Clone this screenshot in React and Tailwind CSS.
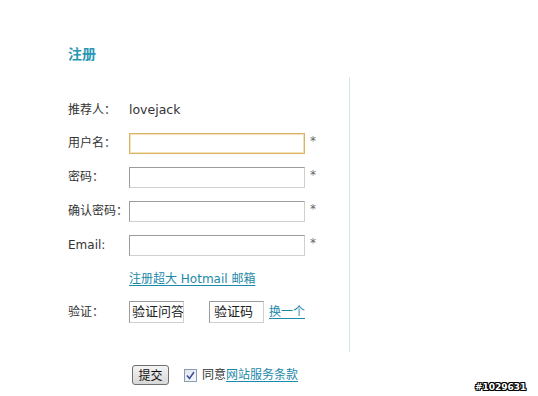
import React from "react";

const font = "font-['DejaVu_Sans','Noto_Sans_CJK_SC',sans-serif]";

function Row({ h, label, children }) {
  return (
    <div className={`flex items-center ${h}`}>
      <div className="w-[61px] shrink-0">{label}</div>
      {children}
    </div>
  );
}

function Field({ focused }) {
  return (
    <div className="flex items-start">
      <div
        className={`w-[176px] h-[21px] bg-white border ${
          focused
            ? "border-[#d8b468] shadow-[inset_0_0_0_1px_#f3e2b8]"
            : "border-[#9c9c9c] border-b-[#cfcfcf] border-r-[#cfcfcf]"
        }`}
      />
      <span className="ml-[5px] mt-[1px] text-[12px] leading-[14px] text-[#666]">*</span>
    </div>
  );
}

export default function App() {
  return (
    <div className={`relative w-[538px] h-[396px] bg-white text-[12px] text-[#333] ${font}`}>
      <div className="pl-[68px] pt-[45px]">
        <h2 className="text-[14px] leading-[16px] font-bold text-[#2b97b3] font-['Noto_Sans_CJK_SC',sans-serif]">
          注册
        </h2>
        <div className="mt-[16px] w-[282px] h-[275px] border-r border-[#cfe9e8] pt-[17px]">
          <Row h="h-[32px]" label="推荐人：">
            <span className="text-[12.5px]">lovejack</span>
          </Row>
          <Row h="h-[34px]" label="用户名：">
            <Field focused />
          </Row>
          <Row h="h-[34px]" label="密码：">
            <Field />
          </Row>
          <Row h="h-[34px]" label="确认密码：">
            <Field />
          </Row>
          <Row h="h-[34px]" label="Email:">
            <Field />
          </Row>
          <Row h="h-[33px]" label="">
            <a className="text-[#1b89a8] underline underline-offset-2 cursor-pointer">
              注册超大 Hotmail 邮箱
            </a>
          </Row>
          <Row h="h-[34px]" label="验证：">
            <div className="flex items-center">
              <div className="w-[55px] h-[22px] border border-[#9c9c9c] border-b-[#cfcfcf] border-r-[#cfcfcf] pl-[2px] overflow-hidden whitespace-nowrap text-[13px] leading-[20px] text-[#222]">
                验证问答
              </div>
              <div className="ml-[25px] w-[55px] h-[22px] border border-[#9c9c9c] border-b-[#cfcfcf] border-r-[#cfcfcf] pl-[4px] overflow-hidden whitespace-nowrap text-[13px] leading-[20px] text-[#222]">
                验证码
              </div>
              <a className="ml-[5px] text-[#1b89a8] underline underline-offset-2 cursor-pointer">换一个</a>
            </div>
          </Row>
        </div>
        <div className="mt-[13px] flex items-center h-[20px] pl-[64px]">
          <button className="w-[37px] h-[20px] rounded-[3px] border border-[#707070] bg-gradient-to-b from-[#f4f4f4] to-[#d8d8d8] text-[12px] leading-[18px] text-[#111] font-['Noto_Sans_CJK_SC',sans-serif]">
            提交
          </button>
          <div className="ml-[15px] w-[13px] h-[13px] border border-[#8a9bb3] bg-gradient-to-br from-[#dfe5ee] to-[#f8f9fb] flex items-center justify-center">
            <svg width="9" height="9" viewBox="0 0 9 9">
              <path d="M1 4.5 L3.5 7.5 L8 1" stroke="#3a4f9a" strokeWidth="1.5" fill="none" />
            </svg>
          </div>
          <span className="ml-[5px]">同意</span>
          <a className="text-[#1b89a8] underline underline-offset-2 cursor-pointer">网站服务条款</a>
        </div>
      </div>
      <div className="absolute left-[475px] top-[382px] text-[9px] leading-[11px] font-bold text-white font-['DejaVu_Sans',sans-serif] [text-shadow:1px_0_0_#000,-1px_0_0_#000,0_1px_0_#000,0_-1px_0_#000,1px_1px_0_#000,-1px_-1px_0_#000,1px_-1px_0_#000,-1px_1px_0_#000]">
        #1029631
      </div>
    </div>
  );
}
